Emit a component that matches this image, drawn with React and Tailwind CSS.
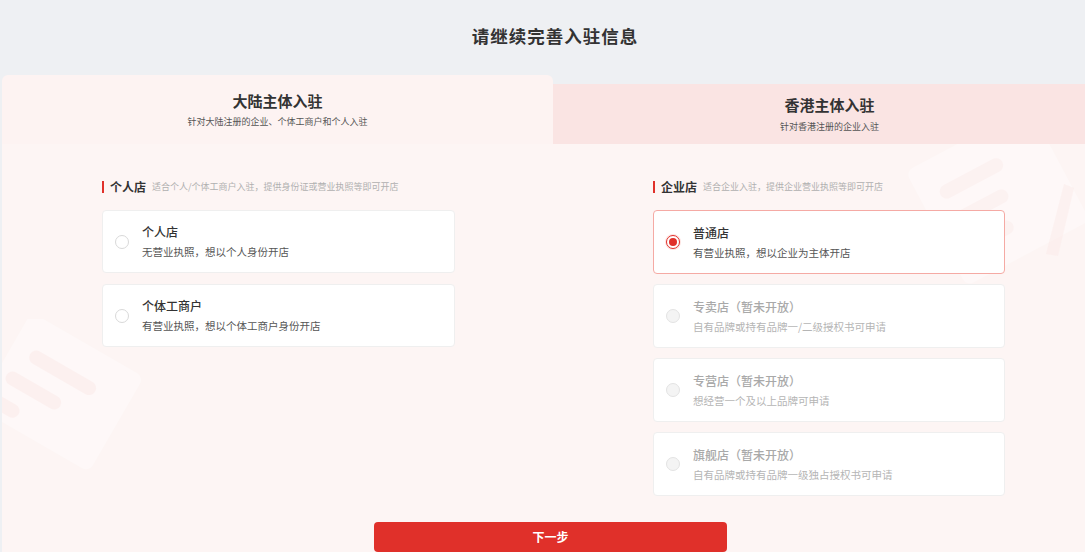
const font = { fontFamily: '"Noto Sans CJK SC", "Noto Sans", sans-serif' };

const personal = [
  { title: "个人店", desc: "无营业执照，想以个人身份开店" },
  { title: "个体工商户", desc: "有营业执照，想以个体工商户身份开店" },
];

const company = [
  { title: "普通店", desc: "有营业执照，想以企业为主体开店", checked: true },
  { title: "专卖店（暂未开放）", desc: "自有品牌或持有品牌一/二级授权书可申请", disabled: true },
  { title: "专营店（暂未开放）", desc: "想经营一个及以上品牌可申请", disabled: true },
  { title: "旗舰店（暂未开放）", desc: "自有品牌或持有品牌一级独占授权书可申请", disabled: true },
];

function Radio({ checked, disabled }) {
  if (checked) {
    return (
      <div className="w-[16px] h-[16px] rounded-full bg-[#fde3e1] flex items-center justify-center shrink-0 -ml-[1px] -mr-[1px]">
        <div className="w-[14px] h-[14px] rounded-full border-[1.5px] border-[#e0302a] bg-white flex items-center justify-center">
          <div className="w-[8px] h-[8px] rounded-full bg-[#e0302a]" />
        </div>
      </div>
    );
  }
  return (
    <div
      className={
        disabled
          ? "w-[14px] h-[14px] rounded-full border border-[#e3e3e3] bg-[#f4f4f4] shrink-0"
          : "w-[14px] h-[14px] rounded-full border border-[#d9d9d9] bg-white shrink-0"
      }
    />
  );
}

function Card({ item, tall }) {
  return (
    <div
      className={
        "flex items-center pl-[12px] rounded-[4px] bg-white border " +
        (item.checked ? "border-[#f5aaa4] " : "border-[#efefef] ") +
        (tall ? "h-[64px]" : "h-[63px]")
      }
    >
      <Radio checked={item.checked} disabled={item.disabled} />
      <div className="ml-[13px] flex flex-col">
        <div
          className={
            "text-[12px] leading-[16px] font-medium " +
            (item.disabled ? "text-[#a9a9a9]" : "text-[#333]")
          }
        >
          {item.title}
        </div>
        <div
          className={
            "text-[10.5px] leading-[14px] mt-[5px] " +
            (item.disabled ? "text-[#b5b5b5]" : "text-[#555]")
          }
        >
          {item.desc}
        </div>
      </div>
    </div>
  );
}

function SectionHead({ title, desc }) {
  return (
    <div className="flex items-center h-[14px] mb-[16px]">
      <div className="w-[2px] h-[12px] bg-[#e0302a]" />
      <div className="ml-[6px] text-[12px] font-bold text-[#333] leading-[14px]">{title}</div>
      <div className="ml-[6px] text-[9px] text-[#b0b0b0] leading-[14px]">{desc}</div>
    </div>
  );
}

function Decor() {
  return (
    <>
      <svg
        className="absolute left-0 top-[175px] pointer-events-none"
        width="140"
        height="160"
        viewBox="0 0 140 160"
      >
        <g transform="rotate(30 60 80)" fill="#ffffff" opacity="0.35">
          <rect x="-10" y="20" width="130" height="110" rx="8" />
        </g>
        <g transform="rotate(30 60 80)" fill="#fbe6e4" opacity="0.4">
          <rect x="10" y="50" width="75" height="14" rx="7" />
          <rect x="0" y="80" width="62" height="14" rx="7" />
          <rect x="-10" y="108" width="40" height="14" rx="7" />
        </g>
      </svg>
      <svg
        className="absolute right-[20px] top-0 pointer-events-none"
        width="190"
        height="150"
        viewBox="0 0 190 150"
      >
        <g transform="rotate(-28 100 70)" fill="#ffffff" opacity="0.35">
          <rect x="40" y="-10" width="140" height="130" rx="8" />
        </g>
        <g transform="rotate(-28 100 70)" fill="#fbe7e5" opacity="0.35">
          <rect x="60" y="20" width="70" height="14" rx="7" />
          <rect x="60" y="50" width="60" height="14" rx="7" />
          <rect x="60" y="80" width="50" height="14" rx="7" />
        </g>
        <g fill="#fbe9e7" opacity="0.45">
          <path d="M150 110 L168 40 L178 44 L162 112 Z" />
        </g>
      </svg>
    </>
  );
}

export default function App() {
  return (
    <div className="w-full h-[552px] bg-[#eef0f3] overflow-hidden" style={font}>
      <div className="w-[1106px]">
        <div className="h-[75px] flex items-center justify-center pb-[3px] pl-[4px]">
          <h1 className="text-[17.5px] font-bold text-[#333] tracking-[1px]">请继续完善入驻信息</h1>
        </div>

        <div className="ml-[2px]">
          <div className="flex items-start">
            <div className="w-[551px] h-[69px] bg-[#fdf3f2] rounded-t-[6px] flex flex-col items-center pt-[16px]">
              <div className="text-[15px] font-bold text-[#333] leading-[20px]">大陆主体入驻</div>
              <div className="text-[9px] text-[#555] mt-[5px] leading-[12px]">针对大陆注册的企业、个体工商户和个人入驻</div>
            </div>
            <div className="flex-1 mt-[9px] h-[60px] bg-[#fae4e3] flex flex-col items-center pt-[11px]">
              <div className="text-[15px] font-bold text-[#333] leading-[20px]">香港主体入驻</div>
              <div className="text-[9px] text-[#555] mt-[6px] leading-[12px]">针对香港注册的企业入驻</div>
            </div>
          </div>

          <div className="relative bg-[#fdf5f4] h-[408px]">
            <Decor />
            <div className="relative flex pt-[36px]">
              <div className="w-[551px] shrink-0">
                <div className="ml-[100px] w-[353px]">
                  <SectionHead title="个人店" desc="适合个人/个体工商户入驻，提供身份证或营业执照等即可开店" />
                  <div className="flex flex-col gap-[11px]">
                    {personal.map((p) => (
                      <Card key={p.title} item={p} />
                    ))}
                  </div>
                </div>
              </div>
              <div className="flex-1">
                <div className="ml-[100px] w-[352px]">
                  <SectionHead title="企业店" desc="适合企业入驻，提供企业营业执照等即可开店" />
                  <div className="flex flex-col gap-[10px]">
                    {company.map((c) => (
                      <Card key={c.title} item={c} tall />
                    ))}
                  </div>
                </div>
              </div>
            </div>
            <div className="relative mt-[26px] ml-[372px] w-[353px]">
              <button className="w-full h-[30px] rounded-[4px] bg-[#e0302a] text-white text-[12px] font-bold">
                下一步
              </button>
            </div>
          </div>
        </div>
      </div>
    </div>
  );
}
